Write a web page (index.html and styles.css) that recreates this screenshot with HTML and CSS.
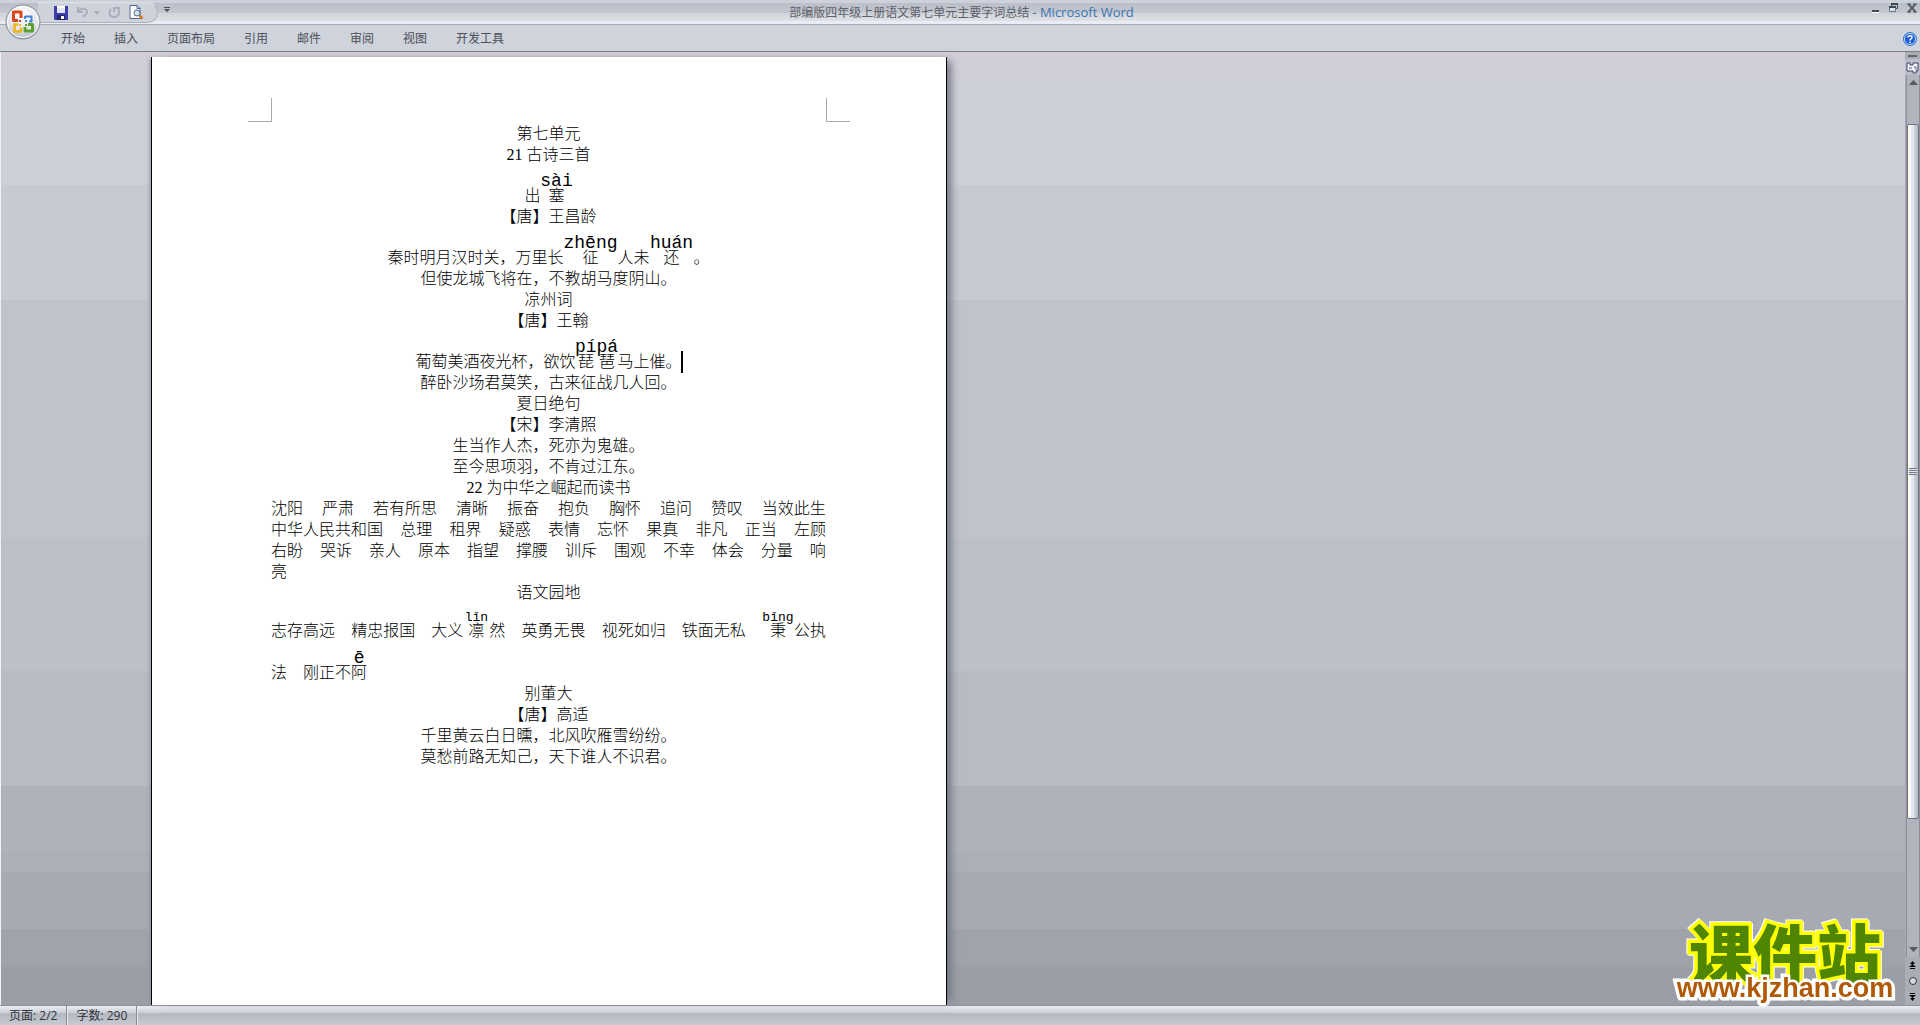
FILE: index.html
```html
<!DOCTYPE html>
<html lang="zh-CN">
<head>
<meta charset="utf-8">
<title>部编版四年级上册语文第七单元主要字词总结 - Microsoft Word</title>
<link rel="stylesheet" href="styles.css">
</head>
<body>
<header class="chrome">
  <div class="titlebar">
    <div class="quick">
      <button class="tool" aria-label="保存"><svg width="14" height="14" viewBox="0 0 14 14"><path d="M0 0h14v14H1l-1-1z" fill="#3a3fa8"/><path d="M3 0h8v7H3z" fill="#dfe6fb"/><path d="M3 0h8v2H3z" fill="#fff"/><path d="M3 9h8v5H3z" fill="#23266e"/><path d="M7 10h3v3H7z" fill="#fff"/></svg></button>
      <button class="tool" aria-label="撤消"><svg width="13" height="13" viewBox="0 0 13 13"><path d="M2 1v5h5M2 6c3-5 9-4 9 0 0 2-2 3-4 5" fill="none" stroke="#a9adbd" stroke-width="2"/></svg></button>
      <button class="tool tool-drop" aria-label="撤消列表"><svg width="6" height="4"><path d="M0 0h6L3 4z" fill="#a9adb8"/></svg></button>
      <button class="tool" aria-label="重复"><svg width="13" height="13" viewBox="0 0 13 13"><path d="M3 3c-3 4-1 8 3 8s7-4 4-8M6 6V2h6" fill="none" stroke="#a9adbd" stroke-width="2"/></svg></button>
      <button class="tool tool-preview" aria-label="打印预览"><svg width="15" height="15" viewBox="0 0 15 15"><path d="M1 .5h7l3 3v10H1z" fill="#fff" stroke="#4d6792"/><path d="M8 .5v3h3" fill="none" stroke="#4d6792"/><circle cx="8" cy="8" r="3" fill="#cfe8f7" stroke="#55697f"/><path d="M10.500 10.500l3 3" stroke="#cc7a1c" stroke-width="2.500"/></svg></button>
    </div>
    <button class="tool more" aria-label="自定义快速访问工具栏"><svg width="6" height="6"><path d="M0 0h6v1H0zM0 2h6L3 5z" fill="#4a4e57"/></svg></button>
    <h1 class="title">部编版四年级上册语文第七单元主要字词总结 <span class="app">- Microsoft Word</span></h1>
    <div class="window-buttons">
      <button class="tool" aria-label="最小化"><svg width="10" height="12"><path d="M1 8h7v2H1z" fill="#3f4a50"/><path d="M1 10h7v1H1z" fill="#fff"/></svg></button>
      <button class="tool" aria-label="还原"><svg width="10" height="12"><path d="M2.500 5V2.500h6v4H7" fill="none" stroke="#4a555e"/><path d="M.5 4.500h6v5h-6z" fill="#dde2ec" stroke="#66748a"/><path d="M0 4h7v2H0zM2 1h7v2H2z" fill="#3f4a50"/></svg></button>
      <button class="tool" aria-label="关闭"><svg width="10" height="12"><path d="M1.500 2l7 8M8.500 2l-7 8" stroke="#566068" stroke-width="2"/><path d="M0 2h4M6 2h4M0 10h4M6 10h4" stroke="#4a545c"/></svg></button>
    </div>
  </div>
  <nav class="tabs">
    <a href="#home">开始</a><a href="#insert">插入</a><a href="#layout">页面布局</a><a href="#refs">引用</a><a href="#mail">邮件</a><a href="#review">审阅</a><a href="#view">视图</a><a href="#dev">开发工具</a>
    <button class="tool help" aria-label="帮助"><svg width="14" height="14" viewBox="0 0 14 14"><circle cx="7" cy="7" r="6.500" fill="#1c5ad8" stroke="#3a76c8"/><circle cx="7" cy="7" r="5.500" fill="none" stroke="#bfe0ff"/><path d="M5 5.500c0-2.500 4-2.500 4 0C9 7 7 6.800 7 8.500M7 9.500v1.500" fill="none" stroke="#fff" stroke-width="1.500"/></svg></button>
  </nav>
  <button class="office" aria-label="Office 按钮"><svg width="36" height="36" viewBox="0 0 36 36">
    <defs><radialGradient id="orb" cx=".5" cy=".3" r=".75"><stop offset="0" stop-color="#fff"/><stop offset=".6" stop-color="#e3e5ea"/><stop offset="1" stop-color="#a3a8b2"/></radialGradient></defs>
    <circle cx="18" cy="18" r="17" fill="url(#orb)" stroke="#878c96"/><circle cx="18" cy="18" r="15.500" fill="none" stroke="#fff"/>
    <g fill="none" stroke-linejoin="round"><path d="M16 12V8H8.500v8.500H13M16 11v3" stroke="#d8481c" stroke-width="3"/><path d="M20 12.500h6.500v5H24M20 12v3" stroke="#3c86d6" stroke-width="2"/><path d="M13 20.500H9.500v7H16v-4" stroke="#f0b21c" stroke-width="2.500"/><path d="M23 20.500h4.500V27H20v-4" stroke="#5aa02c" stroke-width="3"/></g>
    <path d="M14 16h2v2h-2z" fill="#d8481c"/><path d="M20 16h2v2h-2z" fill="#3c86d6"/><path d="M14 20h2v2h-2z" fill="#f0b21c"/><path d="M20 20h2v2h-2z" fill="#5aa02c"/>
  </svg></button>
</header>

<main class="workspace">
  <div class="desk">
    <article class="page">
      <i class="mark mark-left"></i><i class="mark mark-right"></i>
      <p>第七单元</p>
      <p>21 古诗三首</p>
      <p class="tall">出<ruby class="w-sai">塞<rt>sài</rt></ruby></p>
      <p>【唐】王昌龄</p>
      <p class="tall">秦时明月汉时关，万里长<ruby class="w-zheng">征<rt>zhēng</rt></ruby>人未<ruby class="w-huan">还<rt>huán</rt></ruby>。</p>
      <p>但使龙城飞将在，不教胡马度阴山。</p>
      <p>凉州词</p>
      <p>【唐】王翰</p>
      <p class="tall">葡萄美酒夜光杯，欲饮<ruby class="w-pipa"><span class="pair"><span>琵</span><span>琶</span></span><rt>pípá</rt></ruby>马上催。<i class="caret"></i></p>
      <p>醉卧沙场君莫笑，古来征战几人回。</p>
      <p>夏日绝句</p>
      <p>【宋】李清照</p>
      <p>生当作人杰，死亦为鬼雄。</p>
      <p>至今思项羽，不肯过江东。</p>
      <p>22 为中华之崛起而读书</p>
      <p class="words"><span>沈阳</span><span>严肃</span><span>若有所思</span><span>清晰</span><span>振奋</span><span>抱负</span><span>胸怀</span><span>追问</span><span>赞叹</span><span>当效此生</span></p>
      <p class="words"><span>中华人民共和国</span><span>总理</span><span>租界</span><span>疑惑</span><span>表情</span><span>忘怀</span><span>果真</span><span>非凡</span><span>正当</span><span>左顾</span></p>
      <p class="words"><span>右盼</span><span>哭诉</span><span>亲人</span><span>原本</span><span>指望</span><span>撑腰</span><span>训斥</span><span>围观</span><span>不幸</span><span>体会</span><span>分量</span><span>响</span></p>
      <p class="words"><span>亮</span></p>
      <p>语文园地</p>
      <p class="words idioms"><span>志存高远</span><span>精忠报国</span><span>大义<ruby class="small w-lin">凛<rt>lǐn</rt></ruby>然</span><span>英勇无畏</span><span>视死如归</span><span>铁面无私</span><span><ruby class="small w-sai">秉<rt>bǐng</rt></ruby>公执</span></p>
      <p class="words last"><span>法</span><span>刚正不<ruby class="w-e">阿<rt>ē</rt></ruby></span></p>
      <p>别董大</p>
      <p>【唐】高适</p>
      <p>千里黄云白日曛，北风吹雁雪纷纷。</p>
      <p>莫愁前路无知己，天下谁人不识君。</p>
    </article>
  </div>
  <aside class="scroll">
    <i class="split"></i>
    <button class="tool ruler" aria-label="标尺"><svg width="13" height="13" viewBox="0 0 13 13"><path d="M1 2h3v2h3V2h5v8h-2v2H7v-2H1z" fill="#f4f3fb" stroke="#3a4664"/><path d="M3 7h3M8 6h2v3" fill="none" stroke="#55607c"/></svg></button>
    <div class="track">
      <button class="tool arrow" aria-label="向上滚动"><svg width="9" height="5"><path d="M0 5h9L4.500 0z" fill="#565a63"/></svg></button>
      <div class="rail"><div class="thumb"><i class="grip"></i></div></div>
      <button class="tool arrow" aria-label="向下滚动"><svg width="9" height="5"><path d="M0 0h9L4.500 5z" fill="#565a63"/></svg></button>
    </div>
    <div class="browse">
      <button class="tool" aria-label="前一页"><svg width="7" height="8"><path d="M3.500 0L6 3H1zM3.500 3L7 6H0zM1 7h5v1H1z" fill="#000"/></svg></button>
      <button class="tool" aria-label="选择浏览对象"><svg width="8" height="8"><circle cx="4" cy="4" r="3.500" fill="#d6d8de" stroke="#33373f"/></svg></button>
      <button class="tool" aria-label="下一页"><svg width="7" height="8"><path d="M1 0h5v1H1zM0 2h7L3.500 5zM1 5h5L3.500 8z" fill="#000"/></svg></button>
    </div>
  </aside>
</main>

<footer class="status"><span>页面: 2/2</span><span>字数: 290</span></footer>

<div class="brand"><strong>课件站</strong><span>www.kjzhan.com</span></div>
</body>
</html>
```
FILE: styles.css
```css
* { box-sizing: border-box; }
body {
  margin: 0;
  height: 100vh;
  display: flex;
  flex-direction: column;
  overflow: hidden;
  font: 12px/16px "Open Sans", "Noto Sans CJK SC", sans-serif;
  color: #4b4f57;
}
.tool {
  display: flex;
  align-items: center;
  justify-content: center;
  padding: 0;
  border: 0;
  background: none;
}

/* Title bar and ribbon tabs */
.chrome { position: relative; }
.titlebar {
  display: flex;
  align-items: flex-start;
  height: 25px;
  padding-left: 38px;
  border-bottom: 1px solid #a6abb8;
  background: linear-gradient(#cdd1da 0 3px, #bbbfc9 3px, #c3c7d0 13px, #d0d3d9 13px, #dfe1e5 21px, #e8ecf6 21px);
}
.quick {
  display: flex;
  align-items: center;
  gap: 8px;
  width: 120px;
  height: 21px;
  margin-top: 2px;
  padding-left: 16px;
  border: 1px solid #aeb2bd;
  border-left: 0;
  border-top-color: #dfe2e9;
  border-radius: 0 11px 11px 0;
  background: #ced2db;
}
.tool-drop { margin-left: -3px; }
.more { margin: 7px 0 0 6px; }
.title {
  flex: 1;
  margin: 4px 0 0;
  padding-right: 118px;
  font-size: 12px;
  font-weight: 400;
  text-align: center;
  white-space: pre;
  color: #5c6068;
}
.app { font-size: 13px; color: #3c74b0; }
.window-buttons { display: flex; gap: 8px; padding: 2px 3px 0 0; }
.tabs {
  display: flex;
  align-items: center;
  gap: 29px;
  height: 27px;
  padding: 2px 0 0 61px;
  border-bottom: 1px solid #7b8088;
  background: #cfd3dc;
}
.tabs a { color: #4b4f57; text-decoration: none; }
.help { margin: 0 3px 0 auto; }
.office {
  position: absolute;
  left: 5px;
  top: 4px;
  padding: 0;
  border: 0;
  background: none;
  line-height: 0;
}

/* Document area */
.workspace {
  flex: 1;
  min-height: 0;
  display: flex;
  border-left: 1px solid #f2f2f4;
  background: linear-gradient(
    #d2ced9 0 3%,
    #cdd0d9 3% 14%,
    #c7cad3 14% 26%,
    #c0c3cc 26% 51%,
    #bcc0c9 51% 65%,
    #b8bbc4 65% 77%,
    #afb2bb 77% 84%,
    #abafb7 84% 86%,
    #a6aab2 86% 92%,
    #a0a3ab 92% 96%,
    #9a9ea6 96%);
}
.desk { flex: 1; display: flex; padding: 5px 0 0 150px; }
.page {
  position: relative;
  width: 796px;
  padding: 66px 120px 0 119px;
  border: solid #000;
  border-width: 0 1px;
  background: #fff;
  box-shadow: 8px 0 8px -4px #70747e, -3px 0 4px -2px #8d919b;
  font: 16px/21px "Liberation Serif", "Noto Sans CJK SC", serif;
  font-weight: 300;
  text-spacing-trim: space-all;
  color: #000;
}
.mark {
  position: absolute;
  top: 41px;
  width: 24px;
  height: 24px;
  border: solid #a6abb2;
}
.mark-left { left: 96px; border-width: 0 1px 1px 0; }
.mark-right { right: 96px; border-width: 0 0 1px 1px; }
.page p {
  display: flex;
  justify-content: center;
  align-items: flex-end;
  min-height: 21px;
  margin: 0;
  white-space: pre;
}
.page .tall { min-height: 41px; }
.page .words { justify-content: space-between; }
.words > span { display: flex; align-items: flex-end; }
.page .idioms { min-height: 38px; }
.page .last { min-height: 42px; justify-content: flex-start; gap: 16px; }
ruby {
  display: flex;
  flex-direction: column-reverse;
  align-items: center;
}
rt {
  display: block;
  margin-bottom: -5px;
  font-family: "Liberation Mono", monospace;
  font-size: 18px;
  line-height: 18px;
}
.small rt { font-size: 13px; line-height: 14px; }
.pair { display: flex; align-self: stretch; justify-content: space-around; }
.w-sai { width: 32px; }
.w-zheng { width: 54px; }
.w-huan { width: 44px; }
.w-pipa { width: 42px; }
.w-lin { width: 26px; }
.w-e { width: 16px; }
.caret { width: 0; height: 20px; outline: 1px solid #000; }

/* Vertical scroll bar */
.scroll {
  width: 15px;
  display: flex;
  flex-direction: column;
  align-items: stretch;
  padding-top: 3px;
  background: #a9adb6;
}
.split { height: 2px; margin: 0 3px 2px; background: #63666e; }
.ruler { height: 16px; background: #bcbdc8; }
.track {
  flex: 1;
  display: flex;
  flex-direction: column;
  margin-left: 1px;
  border: solid #8c8f9a;
  border-width: 0 1px;
  background: #b1b3bd;
}
.arrow { height: 15px; }
.rail { flex: 1; padding-top: 34px; }
.thumb {
  display: flex;
  align-items: center;
  justify-content: center;
  height: 85%;
  border: 1px solid #72757f;
  border-radius: 2px;
  background: linear-gradient(90deg, #fdfaf0 0 3px, #e2e8f2 3px 6px, #cfd5e0 6px, #b4b9c5);
}
.grip { width: 8px; height: 7px; background: repeating-linear-gradient(#747883 0 1px, #e4e8f0 1px 2px); }
.browse {
  display: flex;
  flex-direction: column;
  justify-content: space-around;
  height: 48px;
}

/* Status bar */
.status {
  display: flex;
  height: 20px;
  border-top: 1px solid #8f949c;
  background: linear-gradient(#e6e9ee 0 1px, #cfd3da 6px, #b4b8c1 8px, #c6cad3);
  line-height: 19px;
  color: #2f3238;
}
.status span { padding: 0 9px; border-right: 1px solid #878c96; box-shadow: 1px 0 #e6e8ed; }

/* Site badge over the lower right corner */
.brand {
  position: fixed;
  right: 21px;
  bottom: 24px;
  width: 228px;
  text-align: center;
  paint-order: stroke fill;
  filter: drop-shadow(1px 1px 0 #fff) drop-shadow(-1px -1px 0 #fff);
}
.brand strong {
  display: block;
  font: 900 64px/50px "Noto Sans CJK SC", sans-serif;
  color: #4f8500;
  -webkit-text-stroke: 7px #ff0;
}
.brand span {
  display: block;
  font: 700 27px/26px "Liberation Sans", Arial, sans-serif;
  color: #b05a08;
  -webkit-text-stroke: 5px #fff;
}
```
